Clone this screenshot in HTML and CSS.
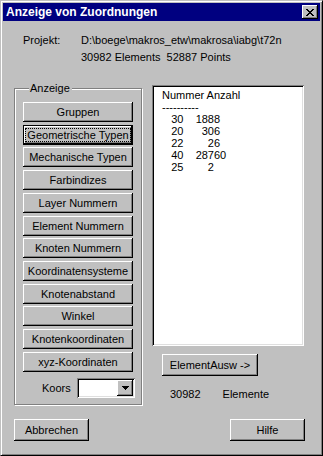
FILE: index.html
```html
<!DOCTYPE html>
<html lang="de">
<head>
  <meta charset="UTF-8">
  <title>Anzeige von Zuordnungen</title>
  <link rel="stylesheet" href="styles.css">
</head>
<body>

  <div class="window">
    <div class="titlebar">
      <span class="title-text">Anzeige von Zuordnungen</span>
      <span class="title-close">
        <svg width="8" height="7" viewBox="0 0 8 7" shape-rendering="crispEdges">
          <path d="M0 0h2v1h-2zM6 0h2v1h-2zM1 1h2v1h-2zM5 1h2v1h-2zM2 2h4v1h-4zM3 3h2v1h-2zM2 4h4v1h-4zM1 5h2v1h-2zM5 5h2v1h-2zM0 6h2v1h-2zM6 6h2v1h-2z" fill="#000"/>
        </svg>
      </span>
    </div>

    <div class="dialog-body">
      <div class="project">
        <span>Projekt:</span>
        <span>D:\boege\makros_etw\makrosa\iabg\t72n</span>
        <span></span>
        <span class="stats">30982 Elements  52887 Points</span>
      </div>

      <div class="main-row">
        <fieldset class="group">
          <legend>Anzeige</legend>
          <div class="btn-list">
            <button class="btn">Gruppen</button>
            <button class="btn btn-default"><span class="focus">Geometrische Typen</span></button>
            <button class="btn">Mechanische Typen</button>
            <button class="btn">Farbindizes</button>
            <button class="btn">Layer Nummern</button>
            <button class="btn">Element Nummern</button>
            <button class="btn">Knoten Nummern</button>
            <button class="btn">Koordinatensysteme</button>
            <button class="btn">Knotenabstand</button>
            <button class="btn">Winkel</button>
            <button class="btn">Knotenkoordinaten</button>
            <button class="btn">xyz-Koordinaten</button>
          </div>
          <div class="koors-row">
            <span>Koors</span>
            <div class="combo">
              <span class="combo-field"></span>
              <span class="combo-arrow">
                <svg width="7" height="4" viewBox="0 0 7 4" shape-rendering="crispEdges">
                  <path d="M0 0h7v1h-7zM1 1h5v1h-5zM2 2h3v1h-3zM3 3h1v1h-1z" fill="#000"/>
                </svg>
              </span>
            </div>
          </div>
        </fieldset>

        <div class="result-col">
          <div class="listbox">
<pre>Nummer Anzahl
----------
   30    1888
   20      306
   22        26
   40    28760
   25        2</pre>
          </div>
          <button class="btn btn-ausw">ElementAusw -&gt;</button>
          <div class="count-row">
            <span>30982</span>
            <span>Elemente</span>
          </div>
        </div>
      </div>

      <div class="footer">
        <button class="btn btn-wide">Abbrechen</button>
        <button class="btn btn-wide">Hilfe</button>
      </div>
    </div>
  </div>

</body>
</html>
```

FILE: styles.css
```css
* {
  box-sizing: border-box;
}
body {
  margin: 0;
  background-color: #c0c0c0;
  font-family: "Liberation Sans", Arial, sans-serif;
  font-size: 11px;
  color: #000;
}
/* fensterrahmen im 95er stil */
.window {
  width: 323px;
  height: 456px;
  border: 1px solid;
  border-color: #c0c0c0 #000 #000 #c0c0c0;
  box-shadow: inset 1px 1px #fff, inset -1px -1px #808080;
  padding: 2px;
  display: flex;
  flex-direction: column;
}
.titlebar {
  height: 18px;
  background-color: #000080;
  color: #fff;
  font-weight: bold;
  display: flex;
  align-items: center;
  justify-content: space-between;
  padding: 0 2px 0 3px;
}
.title-text {
  font-size: 12px;
}
.title-close {
  width: 16px;
  height: 14px;
  background-color: #c0c0c0;
  box-shadow: inset -1px -1px #000, inset 1px 1px #fff, inset -2px -2px #808080;
  display: flex;
  align-items: center;
  justify-content: center;
  padding-right: 1px;
}
.title-close svg {
  display: block;
}
.dialog-body {
  flex: 1;
  padding: 11px 15px 0 11px;
  display: flex;
  flex-direction: column;
}
.project {
  display: grid;
  grid-template-columns: 58px auto;
  line-height: 17px;
  margin-left: 9px;
}
.stats {
  white-space: pre;
}
.main-row {
  display: flex;
  align-items: flex-start;
  margin-top: 16px;
}
/* gruppenrahmen, geaetzte linie */
.group {
  width: 128px;
  height: 323px;
  margin: 0;
  padding: 7px 0 0 8px;
  border: 1px solid #808080;
  box-shadow: inset 1px 1px #fff, 1px 1px #fff;
  display: flex;
  flex-direction: column;
}
.group legend {
  margin-left: 6px;
  padding: 0 2px 0 1px;
  line-height: 13px;
  background-color: #c0c0c0;
}
.btn {
  background-color: #c0c0c0;
  border: none;
  padding: 0;
  font-family: inherit;
  font-size: 11px;
  color: #000;
  box-shadow: inset -1px -1px #000, inset 1px 1px #fff, inset -2px -2px #808080;
}
.btn-list {
  display: flex;
  flex-direction: column;
  justify-content: space-between;
  height: 270px;
}
.btn-list .btn {
  width: 110px;
  height: 20px;
}
.btn-default {
  box-shadow: inset 0 0 0 1px #000, inset -2px -2px #000, inset 2px 2px #fff, inset -3px -3px #808080;
}
.focus {
  outline: 1px dotted #000;
  padding: 0 1px;
}
.koors-row {
  display: flex;
  align-items: center;
  margin-top: 6px;
  padding-left: 19px;
}
.koors-row > span {
  width: 35px;
}
.combo {
  width: 58px;
  height: 20px;
  display: flex;
  background-color: #fff;
  box-shadow: inset 1px 1px #808080, inset -1px -1px #fff, inset 2px 2px #000, inset -2px -2px #dfdfdf;
  padding: 2px;
}
.combo-field {
  flex: 1;
}
.combo-arrow {
  width: 16px;
  height: 16px;
  background-color: #c0c0c0;
  box-shadow: inset -1px -1px #000, inset 1px 1px #fff, inset -2px -2px #808080;
  display: flex;
  align-items: center;
  justify-content: center;
}
.combo-arrow svg {
  display: block;
}
.result-col {
  margin-left: 10px;
  display: flex;
  flex-direction: column;
  align-items: flex-start;
}
.listbox {
  width: 152px;
  height: 261px;
  margin-top: 3px;
  background-color: #fff;
  box-shadow: inset 1px 1px #808080, inset -1px -1px #fff, inset 2px 2px #000, inset -2px -2px #dfdfdf;
  padding: 4px 0 0 10px;
}
.listbox pre {
  margin: 0;
  font-family: inherit;
  font-size: 11px;
  line-height: 12px;
}
.btn-ausw {
  width: 96px;
  height: 22px;
  margin: 8px 0 0 10px;
}
.count-row {
  display: flex;
  gap: 22px;
  margin: 12px 0 0 18px;
  line-height: 13px;
}
.footer {
  display: flex;
  justify-content: space-between;
  margin-top: 14px;
}
.btn-wide {
  width: 75px;
  height: 22px;
}
```
